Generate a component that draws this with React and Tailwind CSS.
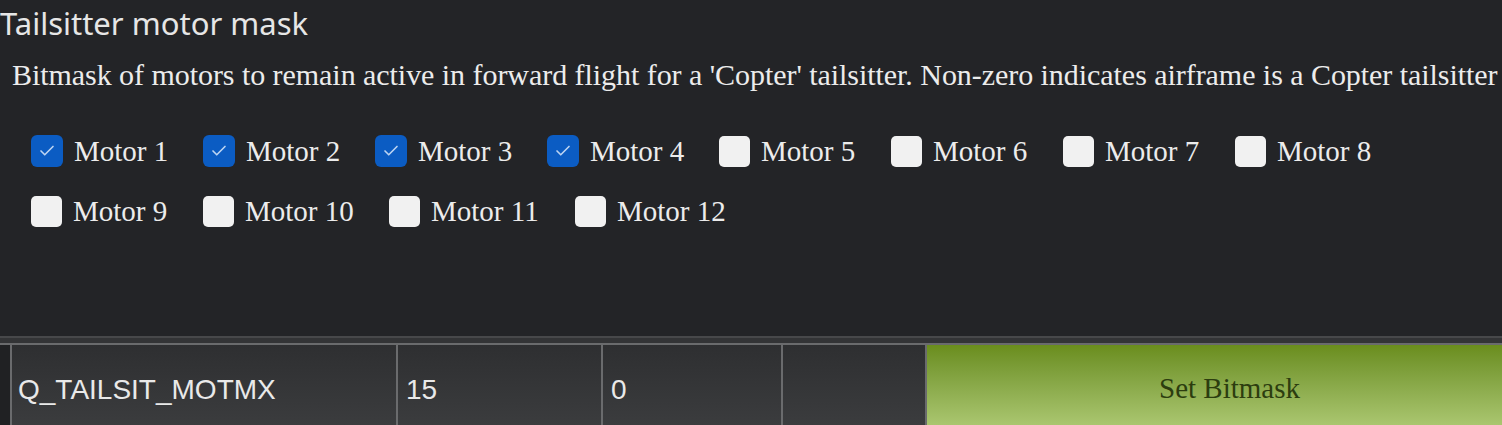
import { Check } from "lucide-react";

const motors = [
  { n: 1, on: true },
  { n: 2, on: true },
  { n: 3, on: true },
  { n: 4, on: true },
  { n: 5, on: false },
  { n: 6, on: false },
  { n: 7, on: false },
  { n: 8, on: false },
  { n: 9, on: false },
  { n: 10, on: false },
  { n: 11, on: false },
  { n: 12, on: false },
];

const serif = "font-['Liberation_Serif','Times_New_Roman',serif]";

const MotorBox = ({ n, on }) => (
  <label
    className={`flex items-center gap-[11px] h-[34px] ${
      n >= 10 ? "w-[186px]" : "w-[172px]"
    }`}
  >
    {on ? (
      <span className="w-[32px] h-[32px] rounded-[6px] bg-[#0b5cc3] flex items-center justify-center">
        <Check size={18} strokeWidth={2.2} className="text-[#bcd4f2]" />
      </span>
    ) : (
      <span className="w-[31px] h-[31px] rounded-[5px] bg-[#f1f1f1] blur-[0.6px]" />
    )}
    <span className={`${serif} text-[29px] leading-none text-[#ececec]`}>
      Motor {n}
    </span>
  </label>
);

const Cell = ({ w, children }) => (
  <div
    className={`${w} h-full border-r-2 border-[#6a6b6d] bg-gradient-to-b from-[#2e2f31] to-[#3b3c3e] flex items-center pt-[10px] font-['Liberation_Sans',Arial,sans-serif] text-[28px] text-[#e9e9e9]`}
  >
    {children}
  </div>
);

export default function App() {
  return (
    <div className="w-[1502px] h-[425px] bg-[#232427] overflow-hidden flex flex-col">
      <h1 className="font-['Noto_Sans',sans-serif] text-[31px] leading-[42px] text-[#e6e6e6] pt-[2px]">
        Tailsitter motor mask
      </h1>
      <p className={`${serif} text-[30px] leading-[34px] text-[#ececec] pl-[12px] mt-[14px] whitespace-nowrap tracking-[-0.05px]`}>
        Bitmask of motors to remain active in forward flight for a 'Copter' tailsitter. Non-zero indicates airframe is a Copter tailsitter
      </p>

      <div className="pl-[31px] mt-[42px] flex flex-wrap w-[1460px] gap-y-[26px]">
        {motors.slice(0, 8).map((m) => (
          <MotorBox key={m.n} {...m} />
        ))}
        <div className="w-full flex">
          {motors.slice(8).map((m) => (
            <MotorBox key={m.n} {...m} />
          ))}
        </div>
      </div>

      {/* parameter row */}
      <div className="mt-auto h-[89px] flex flex-col">
        <div className="h-[2px] bg-[#47484a]" />
        <div className="h-[5px] bg-[#333436]" />
        <div className="h-[2px] bg-[#6a6b6d]" />
        <div className="flex-1 flex">
          <div className="w-[12px] h-full bg-[#202123] border-r-2 border-[#6a6b6d]" />
          <Cell w="w-[386px] pl-[6px]">Q_TAILSIT_MOTMX</Cell>
          <Cell w="w-[205px] pl-[8px]">15</Cell>
          <Cell w="w-[180px] pl-[8px]">0</Cell>
          <Cell w="w-[144px]" />
          <button className="flex-1 h-full bg-gradient-to-b from-[#6a8d1c] to-[#aac66f] flex items-center justify-center pl-[30px] pt-[8px]">
            <span className={`${serif} text-[29px] text-[#2c3d0f]`}>
              Set Bitmask
            </span>
          </button>
        </div>
      </div>
    </div>
  );
}
